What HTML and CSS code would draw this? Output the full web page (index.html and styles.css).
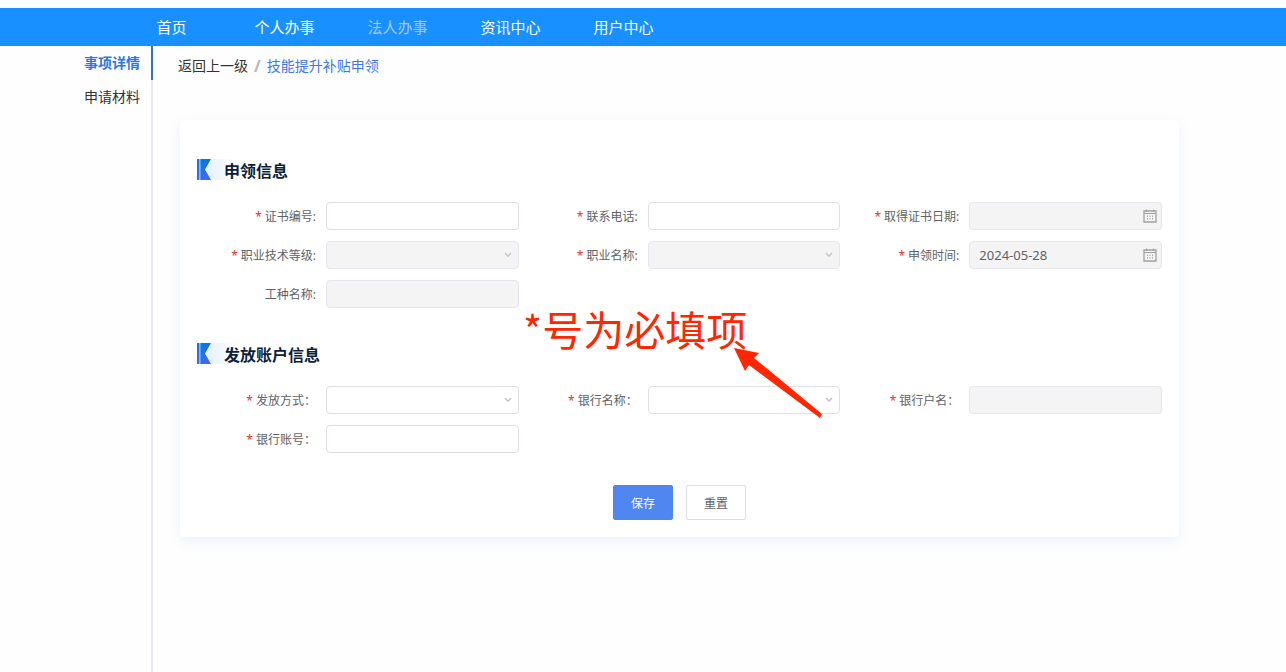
FILE: index.html
```html
<!DOCTYPE html>
<html lang="zh-CN">
<head>
  <meta charset="UTF-8">
  <title>技能提升补贴申领</title>
  <meta name="viewport" content="width=device-width, initial-scale=1">
  <link rel="stylesheet" href="styles.css">
</head>
<body>
  <svg class="sprite" aria-hidden="true">
    <defs>
      <linearGradient id="mark-blue" x1="0" y1="0" x2="0" y2="1">
        <stop offset="0" stop-color="#0a78d8"/>
        <stop offset="1" stop-color="#4268f0"/>
      </linearGradient>
      <linearGradient id="mark-fade" x1="0" y1="0" x2="1" y2="0">
        <stop offset="0" stop-color="#e3f0fe"/>
        <stop offset="1" stop-color="#ffffff"/>
      </linearGradient>
    </defs>
    <symbol id="mark" viewBox="0 0 40 21">
      <rect x="8" width="32" height="21" fill="url(#mark-fade)"/>
      <path d="M0 0H14L8 10.5L14 21H0Z" fill="url(#mark-blue)"/>
      <rect x="2" width="1" height="21" fill="#8dbdf3"/>
      <rect x="3" width="1" height="21" fill="#5b9dee"/>
    </symbol>
    <symbol id="arrow-down" viewBox="0 0 8 6">
      <path d="M1 1L4 4.3L7 1" fill="none" stroke="#c0c4cc" stroke-width="1.4"/>
    </symbol>
    <symbol id="calendar" viewBox="0 0 14 14">
      <path d="M1 2H13V13H1Z" fill="none" stroke="#a0a0a0" stroke-width="1.3"/>
      <path d="M1 4.5H13 M3.5 0.5V3 M10.5 0.5V3" stroke="#a0a0a0"/>
      <path d="M4.5 6.5V8 M7 6.5V8 M9.5 6.5V8 M4.5 9V10.5 M7 9V10.5 M9.5 9V10.5" stroke="#a8a8a8"/>
    </symbol>
  </svg>

  <header class="topbar">
    <nav class="nav">
      <a href="#">首页</a>
      <a href="#">个人办事</a>
      <a href="#" class="current">法人办事</a>
      <a href="#">资讯中心</a>
      <a href="#">用户中心</a>
    </nav>
  </header>

  <div class="layout">
    <aside class="sidebar">
      <a href="#" class="active">事项详情</a>
      <a href="#">申请材料</a>
    </aside>

    <main class="content">
      <div class="breadcrumb">
        <a href="#">返回上一级</a>
        <span class="slash">/</span>
        <a href="#" class="here">技能提升补贴申领</a>
      </div>

      <form class="card">
        <h2 class="section-title"><svg class="mark"><use href="#mark"/></svg>申领信息</h2>
        <div class="fields">
          <div class="field">
            <label class="required" for="cert-no">证书编号:</label>
            <div class="control"><input type="text" id="cert-no"></div>
          </div>
          <div class="field">
            <label class="required" for="phone">联系电话:</label>
            <div class="control"><input type="text" id="phone"></div>
          </div>
          <div class="field">
            <label class="required" for="cert-date">取得证书日期:</label>
            <div class="control"><input type="text" id="cert-date" disabled><svg class="icon-date"><use href="#calendar"/></svg></div>
          </div>
          <div class="field">
            <label class="required" for="level">职业技术等级:</label>
            <div class="control"><select id="level" disabled><option></option></select><svg class="icon-down"><use href="#arrow-down"/></svg></div>
          </div>
          <div class="field">
            <label class="required" for="job">职业名称:</label>
            <div class="control"><select id="job" disabled><option></option></select><svg class="icon-down"><use href="#arrow-down"/></svg></div>
          </div>
          <div class="field">
            <label class="required" for="apply-date">申领时间:</label>
            <div class="control"><input type="text" id="apply-date" value="2024-05-28" disabled><svg class="icon-date"><use href="#calendar"/></svg></div>
          </div>
          <div class="field">
            <label for="work-type">工种名称:</label>
            <div class="control"><input type="text" id="work-type" disabled></div>
          </div>
        </div>

        <h2 class="section-title"><svg class="mark"><use href="#mark"/></svg>发放账户信息</h2>
        <div class="fields">
          <div class="field">
            <label class="required" for="pay-way">发放方式：</label>
            <div class="control"><select id="pay-way"><option></option></select><svg class="icon-down"><use href="#arrow-down"/></svg></div>
          </div>
          <div class="field">
            <label class="required" for="bank">银行名称：</label>
            <div class="control"><select id="bank"><option></option></select><svg class="icon-down"><use href="#arrow-down"/></svg></div>
          </div>
          <div class="field">
            <label class="required" for="holder">银行户名：</label>
            <div class="control"><input type="text" id="holder" disabled></div>
          </div>
          <div class="field">
            <label class="required" for="account">银行账号：</label>
            <div class="control"><input type="text" id="account"></div>
          </div>
        </div>

        <div class="actions">
          <button type="submit" class="btn primary">保存</button>
          <button type="reset" class="btn">重置</button>
        </div>

        <!-- 必填提示 -->
        <div class="note">
          <span class="note-text">*号为必填项</span>
          <svg class="note-arrow" viewBox="0 0 90 72">
            <path d="M1 1L26 6L21 11L89 67L87 71L16 18L12 24Z" fill="#ff2600"/>
          </svg>
        </div>
      </form>
    </main>
  </div>
</body>
</html>
```
FILE: styles.css
```css
* {
  box-sizing: border-box;
}
body {
  margin: 0;
  padding-top: 8px;
  min-height: 100vh;
  display: flex;
  flex-direction: column;
  font-family: "Noto Sans", "Noto Sans CJK SC", sans-serif;
  font-size: 14px;
  color: #333;
  background: #fefefe;
}
a {
  color: inherit;
  text-decoration: none;
}
.sprite {
  position: absolute;
  width: 0;
  height: 0;
}
.topbar {
  background: #1890ff;
  padding-left: 115px;
}
.nav {
  display: flex;
}
.nav a {
  width: 113px;
  line-height: 38px;
  text-align: center;
  font-size: 15px;
  color: #fff;
}
.nav .current {
  color: #a9c9e8;
}
.layout {
  flex: 1;
  display: flex;
}
.sidebar {
  width: 153px;
  flex-shrink: 0;
  background: linear-gradient(#e8ebf3, #e8ebf3) right / 2px 100% no-repeat;
}
.sidebar a {
  display: block;
  line-height: 34px;
  padding-right: 11px;
  text-align: right;
  border-right: 2px solid transparent;
}
.sidebar .active {
  color: #2b78e4;
  font-weight: bold;
  border-color: #2f74c8;
}
.content {
  flex: 1;
  padding: 0 107px 24px 25px;
}
.breadcrumb {
  display: flex;
  gap: 6px;
  line-height: 40px;
  margin-bottom: 34px;
}
.breadcrumb .slash {
  font-size: 16px;
  color: #b4b8c0;
  font-weight: bold;
}
.breadcrumb .here {
  color: #3a78ec;
}
.card {
  position: relative;
  margin-left: 2px;
  padding: 39px 17px 17px;
  background: #fff;
  border-radius: 4px;
  box-shadow: 0 4px 12px rgba(60, 130, 240, 0.1);
}
.section-title {
  display: flex;
  align-items: center;
  height: 21px;
  margin: 0 0 22px;
  font-size: 16px;
  color: #0c1f3c;
}
.mark {
  width: 40px;
  height: 21px;
  margin-right: -13px;
}
.fields {
  display: grid;
  grid-template-columns: repeat(3, 1fr);
  row-gap: 11px;
}
.fields + .section-title {
  margin-top: 35px;
}
.field {
  display: flex;
  align-items: center;
}
.field label {
  width: 129px;
  padding-right: 10px;
  text-align: right;
  font-size: 12px;
  color: #606266;
}
.required::before {
  content: "*";
  margin-right: 3px;
  color: #e0342c;
}
.control {
  position: relative;
  flex: 1;
}
.control input,
.control select {
  display: block;
  width: 100%;
  height: 28px;
  padding: 0 9px;
  border: 1px solid #dcdfe6;
  border-radius: 4px;
  background: #fff;
  font-family: inherit;
  font-size: 13px;
  color: #606266;
  appearance: none;
}
.control input:disabled,
.control select:disabled {
  background: #f4f4f4;
  border-color: #e4e7ed;
  opacity: 1;
}
.icon-down {
  position: absolute;
  top: 11px;
  right: 7px;
  width: 8px;
  height: 6px;
  pointer-events: none;
}
.icon-date {
  position: absolute;
  top: 7px;
  right: 5px;
  width: 14px;
  height: 14px;
  pointer-events: none;
}
.actions {
  display: flex;
  justify-content: center;
  gap: 13px;
  margin-top: 32px;
}
.btn {
  width: 60px;
  height: 35px;
  padding: 0;
  border: 1px solid #dcdfe6;
  border-radius: 2px;
  background: #fff;
  font-family: inherit;
  font-size: 12px;
  color: #606266;
  cursor: pointer;
}
.btn.primary {
  border-color: #4f86f0;
  background: #4f86f0;
  color: #fff;
}
.note {
  position: absolute;
  top: 178px;
  left: 343px;
  color: #ff2600;
  pointer-events: none;
}
.note-text {
  font-size: 41px;
  line-height: 60px;
  font-family: "Noto Sans CJK SC", sans-serif;
  white-space: nowrap;
}
.note-arrow {
  position: absolute;
  top: 49px;
  left: 210px;
  width: 90px;
  height: 72px;
}
```
